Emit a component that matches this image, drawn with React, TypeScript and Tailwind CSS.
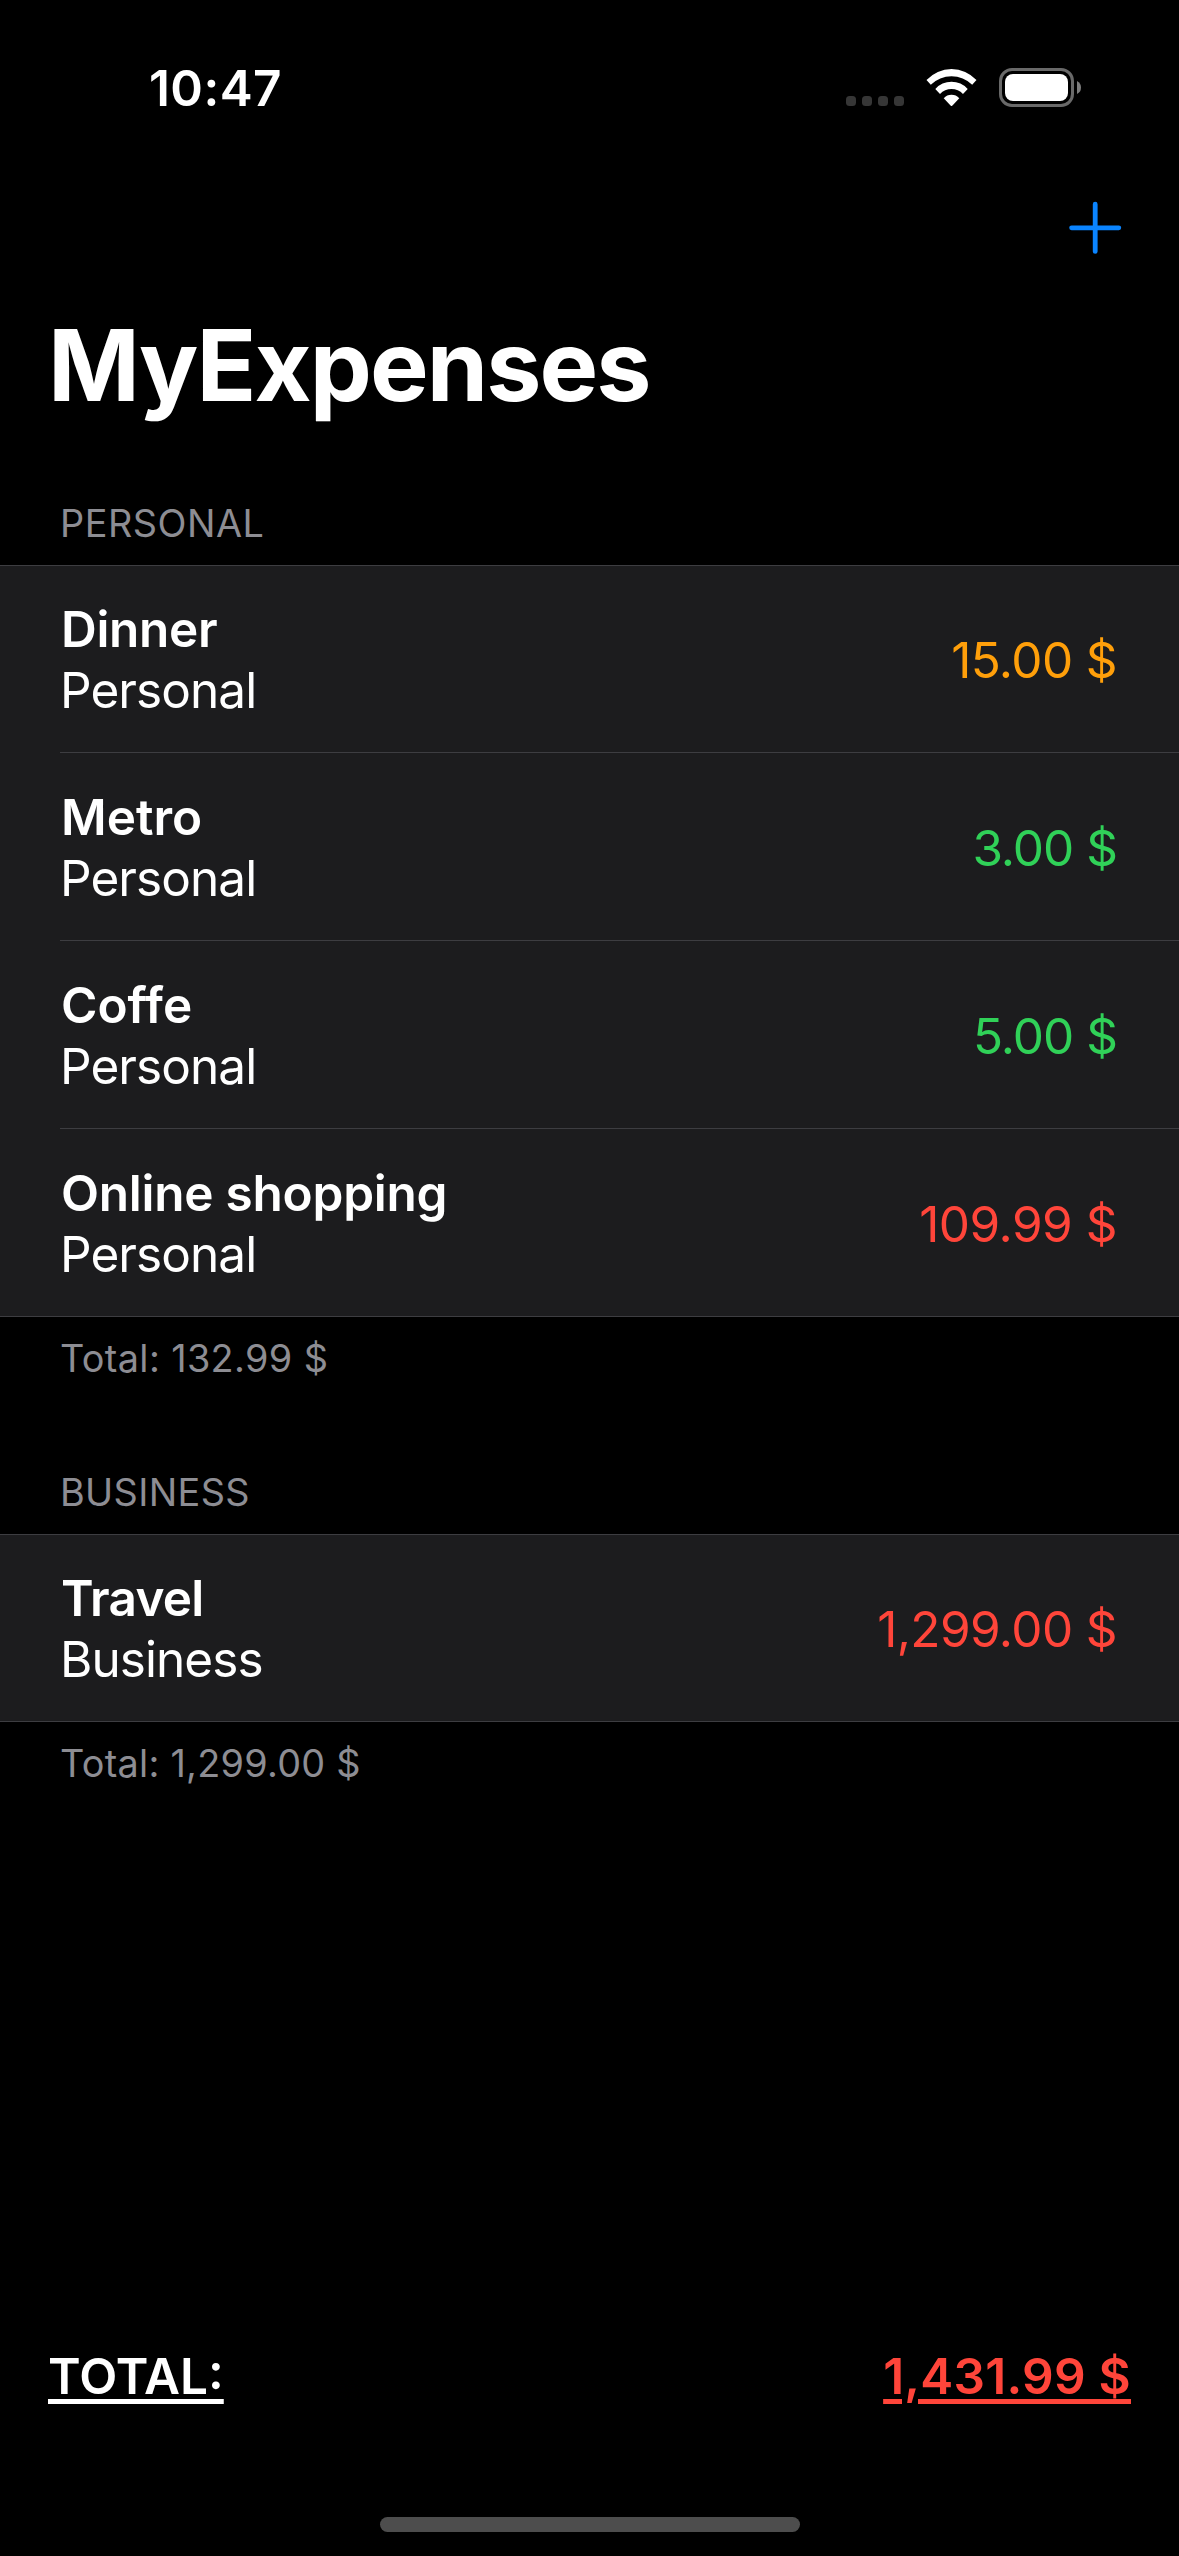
type Row = { name: string; type: string; amount: string; nameClass: string; amountClass: string };

const personal: Row[] = [
  { name: 'Dinner', type: 'Personal', amount: '15.00 $', nameClass: 'tracking-[-0.31px]', amountClass: 'text-[#ff9f0a] tracking-[-0.6px]' },
  { name: 'Metro', type: 'Personal', amount: '3.00 $', nameClass: '', amountClass: 'text-[#30d158] tracking-[-1px]' },
  { name: 'Coffe', type: 'Personal', amount: '5.00 $', nameClass: '', amountClass: 'text-[#30d158] tracking-[-1px]' },
  { name: 'Online shopping', type: 'Personal', amount: '109.99 $', nameClass: 'tracking-[-0.24px]', amountClass: 'text-[#ff453a] tracking-[-0.5px]' },
];

const business: Row[] = [
  { name: 'Travel', type: 'Business', amount: '1,299.00 $', nameClass: 'tracking-[-0.75px]', amountClass: 'text-[#ff453a] tracking-[-0.6px]' },
];

function StatusBar() {
  return (
    <header className="flex h-[177px] shrink-0 items-start justify-between pr-[97px] pl-[149px]">
      <div className="mt-[58px] text-[49.5px] leading-[61px] font-semibold tracking-[0.44px]">10:47</div>
      <div className="mt-[66px] flex">
        <div className="mt-[30px] flex gap-[6px]">
          {[0, 1, 2, 3].map((i) => (
            <span key={i} className="size-[10px] rounded-[3.5px] bg-[#363636]" />
          ))}
        </div>
        <svg className="mt-[2px] ml-[22px]" width="51" height="39" viewBox="926 68 51 39" fill="#fff">
          <path d="M926.5 80A34 34 0 0 1 976.5 80L972.2 84.7A29.7 29.7 0 0 0 930.8 84.7Z" />
          <path d="M935.3 89A21.6 21.6 0 0 1 967.7 89L963 93.9A15.8 15.8 0 0 0 940 93.9Z" />
          <path d="M943.7 98.2A10.6 10.6 0 0 1 959.3 98.2L952.2 105.7Q951.5 106.3 950.8 105.7Z" />
        </svg>
        <svg className="mt-[2px] ml-[22px]" width="83" height="39" viewBox="0 0 83 39">
          <rect x="1.5" y="1.5" width="72" height="36" rx="11.5" fill="none" stroke="#696969" strokeWidth="3" />
          <rect x="6" y="6" width="63" height="27" rx="8" fill="#fff" />
          <path d="M78 13Q82 15 82 19.5T78 26Z" fill="#7d7d7d" />
        </svg>
      </div>
    </header>
  );
}

type SectionProps = { title: string; titleClass: string; rows: Row[]; total: string; totalClass: string };

function Section({ title, titleClass, rows, total, totalClass }: SectionProps) {
  return (
    <section>
      <h2 className={`h-[66px] px-[60px] text-[37.8px] leading-[48px] text-[#8d8d93] ${titleClass}`}>{title}</h2>
      <div className="border-y border-[#3d3d41] bg-[#1c1c1e]">
        {rows.map((r, i) => (
          <div key={r.name} className="pl-[60px]">
            <div className={i ? 'border-t border-[#3d3d41] pt-px' : ''}>
              <div className="flex h-[186px] items-center justify-between pt-[2px] pr-[62px] text-[49.5px] leading-[61px]">
                <div>
                  <div className={`ml-px font-semibold ${r.nameClass}`}>{r.name}</div>
                  <div className="tracking-[-0.93px]">{r.type}</div>
                </div>
                <div className={r.amountClass}>{r.amount}</div>
              </div>
            </div>
          </div>
        ))}
      </div>
      <div className={`px-[60px] pt-[17px] text-[37.8px] leading-[48px] text-[#8d8d93] ${totalClass}`}>{total}</div>
    </section>
  );
}

export default function App() {
  return (
    <div className="flex h-[2556px] w-[1179px] flex-col bg-black font-['Inter',sans-serif] text-white">
      <StatusBar />
      <div className="flex h-[126px] shrink-0 justify-end pt-[24px] pr-[57px]">
        <svg width="54" height="54" viewBox="0 0 54 54" stroke="#0a84ff" strokeWidth="4.8" strokeLinecap="round">
          <path d="M27.2 3.2v47.2M3.6 26.8h47.2" />
        </svg>
      </div>
      <h1 className="h-[196px] shrink-0 px-[48px] pt-px text-[98.6px] leading-[123px] font-bold tracking-[-1.95px]">MyExpenses</h1>
      <main className="flex flex-col gap-[86px]">
        <Section title="PERSONAL" titleClass="tracking-[0.52px]" rows={personal} total="Total: 132.99 $" totalClass="tracking-[0.37px]" />
        <Section title="BUSINESS" titleClass="tracking-[0.37px]" rows={business} total="Total: 1,299.00 $" totalClass="tracking-[0.27px]" />
      </main>
      <footer className="mt-auto pb-[24px]">
        <div className="mb-[110px] flex justify-between px-[48px] text-[49.5px] leading-[61px] font-semibold">
          <span className="underline decoration-[5px] underline-offset-[5px]">TOTAL:</span>
          <span className="tracking-[0.25px] text-[#ff453a] underline decoration-[5px] underline-offset-[5px]">1,431.99 $</span>
        </div>
        <div className="ml-[380px] h-[15px] w-[420px] rounded-full bg-[#4d4d4d]" />
      </footer>
    </div>
  );
}
